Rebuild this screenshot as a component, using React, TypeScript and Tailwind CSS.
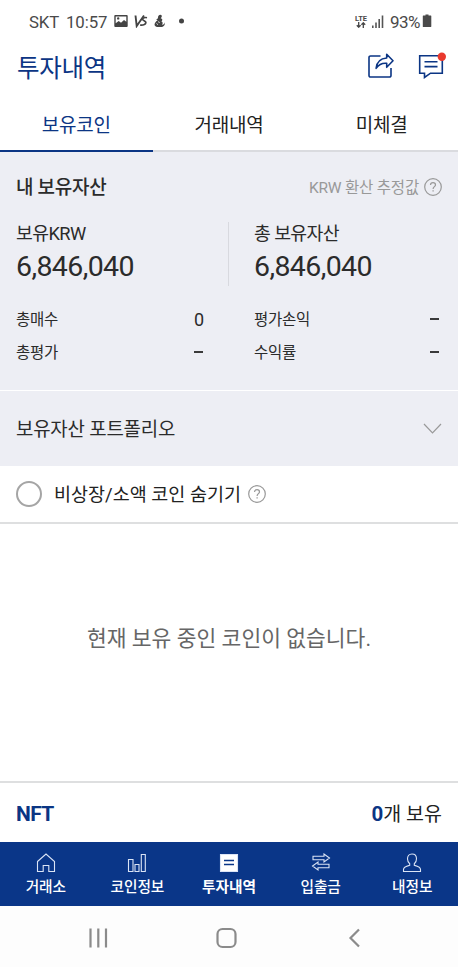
import type { ReactNode } from "react";

const FONT = "font-[Roboto,'Noto_Sans_CJK_KR',sans-serif]";

type TabKey = "holdings" | "history" | "open";

const tabs: { key: TabKey; label: string }[] = [
  { key: "holdings", label: "보유코인" },
  { key: "history", label: "거래내역" },
  { key: "open", label: "미체결" },
];

function HelpIcon() {
  return (
    <svg width="18" height="18" viewBox="0 0 18 18" fill="none" stroke="#999" strokeWidth="1.2">
      <circle cx="9" cy="9" r="8.3" />
      <path d="M6.5 7.1C6.5 5.6 7.5 4.7 9 4.7s2.5.9 2.5 2.2c0 1.7-2.4 1.9-2.4 4" />
      <path d="M9.1 12.2v1.4" strokeWidth="1.3" />
    </svg>
  );
}

function StatusBar() {
  return (
    <div className="flex h-[42px] shrink-0 items-center pr-[26px] pl-[29px] text-[#4a4a4a]">
      <span className="mt-[3px] w-[31px] text-[16.8px] tracking-[-0.1px]">SKT</span>
      <span className="mt-[3px] ml-1.5 w-[48px] text-[16.8px] tracking-[-0.1px]">10:57</span>
      <svg width="72" height="14" viewBox="0 0 72 14">
        <path
          fillRule="evenodd"
          fill="#444"
          d="M1.2 1h11.6a.9.9 0 0 1 .9.9v10.2a.9.9 0 0 1-.9.9H1.2a.9.9 0 0 1-.9-.9V1.900A.9.9 0 0 1 1.200 1Zm.5 1.400v6.800l3-2.200 2.300 1.700 3-2.700 2.300 1.800V2.400ZM4.200 3.200a1.200 1.200 0 1 1 0 2.400 1.200 1.200 0 0 1 0-2.400Z"
        />
        <path d="M21.5 1.5 22.7 12 30 1.5" fill="none" stroke="#444" strokeWidth="1.9" />
        <path d="M33 3.700c-2-.6-4.300.3-4.300 1.700 0 1.300 3.400 1.500 3.200 3.300-.2 1.900-3.400 2.900-5.700 2.200" fill="none" stroke="#444" strokeWidth="1.7" />
        <path
          d="M46.200.8c1.500 0 2.100 1.300 1.300 2.400l-.8 1c2 .3 2.100 2 .7 3.200 1.700.6 1.500 2.200.5 3.300 1.800.2 2.700-.9 2.800-2.500.8 3.400-1.700 5.100-4.500 4.700-1.900.5-4.900.1-5.700-2 0-2 1.500-3.800 3.300-4.700l-1.700-.5c1-.7 1.900-1.200 1.900-2.300 0-1.500 1.200-2.500 2.200-2.600Z"
          fill="#444"
        />
        <path d="m42.500 9.500 1.500 1.200M44 7.700l1.800.8" stroke="#fff" strokeWidth=".8" />
        <circle cx="67.500" cy="7" r="2.500" fill="#444" />
      </svg>
      <div className="ml-auto flex items-center">
        <div className="flex w-[14px] flex-col items-center">
          <span className="text-[7.5px] leading-[7px] font-bold">LTE</span>
          <svg width="10" height="6" viewBox="0 0 10 6" fill="none" stroke="#444" strokeWidth="1.3">
            <path d="M2.700 0v5M.8 3.300l1.900 1.900 1.900-1.900M7.300 6V1M5.400 2.700 7.300.8l1.900 1.900" />
          </svg>
        </div>
        <svg className="ml-1" width="12" height="13" viewBox="0 0 12 13" fill="#555">
          <path d="M0 10.500h1.600V13H0zM3.200 7.500h1.600V13H3.200zM6.400 4H8v9H6.400zM9.700.5h1.600V13H9.700z" />
        </svg>
        <span className="mt-[3px] ml-1.5 w-[32px] text-[17px] tracking-[-0.5px]">93%</span>
        <svg width="10" height="14" viewBox="0 0 10 14" fill="#4a4a4a">
          <path d="M3.500.5h3v1h2.300c.3 0 .5.200.5.500v10.500c0 .3-.2.500-.5.500H1.300a.5.5 0 0 1-.5-.5V2c0-.3.200-.5.500-.5h2.200z" />
        </svg>
      </div>
    </div>
  );
}

function Header() {
  return (
    <header className="flex h-14 shrink-0 items-center justify-between pr-3 pl-[17px] text-[#0b3584]">
      <h1 className="mt-[-2px] text-[24.5px] tracking-[-0.3px]">투자내역</h1>
      <div className="mt-[-9px] flex items-center">
        <svg width="27" height="27" viewBox="0 0 27 27" fill="none" stroke="#0b3584" strokeWidth="1.6">
          <path d="M13.500 4H3.500A1.500 1.500 0 0 0 2 5.500v18A1.500 1.500 0 0 0 3.500 25h19a1.500 1.500 0 0 0 1.500-1.500V16" />
          <path d="M19.700 2.300 26 8.800l-6.300 6.500v-4c-5-.5-8 1.300-10.600 5C9.700 10.500 13 6.500 19.700 6Z" strokeLinejoin="round" />
        </svg>
        <svg className="ml-6" width="28" height="27" viewBox="0 0 28 27" fill="none" stroke="#0b3584" strokeWidth="1.6">
          <path d="M1.700 3.700h22.600v17.500H12.500l-6 4.300v-4.300H1.700Z" />
          <path d="M6.500 9.800h13M6.500 14.600h13" />
          <circle cx="23.800" cy="4.700" r="4.200" fill="#e9392d" stroke="none" />
        </svg>
      </div>
    </header>
  );
}

function Tabs({ active }: { active: TabKey }) {
  return (
    <nav className="grid h-[54px] shrink-0 grid-cols-3 text-[19px] tracking-[-0.2px]">
      {tabs.map(({ key, label }) => (
        <button
          key={key}
          className={
            key === active
              ? "border-b-2 border-[#0b3584] pt-1 text-[#0b3584]"
              : "border-b-2 border-[#dadbdf] pt-1 text-[#222]"
          }
        >
          {label}
        </button>
      ))}
    </nav>
  );
}

function AssetRow({ label, value }: { label: string; value?: string }) {
  return (
    <div className="flex h-[33px] items-center justify-between text-[#2b2b2b]">
      <span className="pt-0.5 text-[15.5px] tracking-[-0.3px]">{label}</span>
      {value ? (
        <span className="text-[18px]">{value}</span>
      ) : (
        <span className="mr-px mb-px h-[2px] w-[9px] bg-[#3a3a3a]" />
      )}
    </div>
  );
}

function AssetColumn({ title, amount, children }: { title: string; amount: string; children: ReactNode }) {
  return (
    <div>
      <p className="h-[23px] text-[18.3px] leading-[23px] tracking-[-0.6px] text-[#2b2b2b]">{title}</p>
      <p className="mt-[5px] h-[34px] text-[28.5px] leading-[34px] tracking-[-0.6px] text-[#2b2b2b]">{amount}</p>
      <div className="mt-[19px]">{children}</div>
    </div>
  );
}

function Assets() {
  return (
    <section className="h-[238px] shrink-0 bg-[#edeef4] pr-4 pl-4">
      <div className="flex h-[70px] items-center justify-between">
        <h2 className="pt-[3px] text-[19px] font-medium tracking-[-0.3px] text-[#2b2b2b]">내 보유자산</h2>
        <div className="flex items-center gap-[5px] text-[15.5px] tracking-[-0.2px] text-[#999]">
          <span className="pt-[3px]">KRW 환산 추정값</span>
          <HelpIcon />
        </div>
      </div>
      <div className="grid grid-cols-[188px_25px_1fr]">
        <AssetColumn title="보유KRW" amount="6,846,040">
          <AssetRow label="총매수" value="0" />
          <AssetRow label="총평가" />
        </AssetColumn>
        <div className="h-[64px] w-px justify-self-end bg-[#d8d9df]" />
        <div className="pr-0.5 pl-[25px]">
          <AssetColumn title="총 보유자산" amount="6,846,040">
            <AssetRow label="평가손익" />
            <AssetRow label="수익률" />
          </AssetColumn>
        </div>
      </div>
    </section>
  );
}

const navItems: { label: string; icon: ReactNode; active?: boolean }[] = [
  { label: "거래소", icon: <path d="M1.500 8.500 10 1l8.500 7.500v10h-5.700v-6H7.200v6H1.500Z" /> },
  { label: "코인정보", icon: <path d="M1.500 6.500H6v12H1.500ZM8 11.500h4v7H8ZM14.300 1.500h4v17h-4Z" /> },
  {
    label: "투자내역",
    active: true,
    icon: (
      <>
        <path d="M1.500 1.500h17v17h-17Z" fill="#fff" />
        <path d="M5 7.500h10M5 11.500h10" stroke="#0a3688" strokeWidth="1.4" />
      </>
    ),
  },
  { label: "입출금", icon: <path d="M2 3.200h11V1l5.500 4-5.500 4V6.700H2ZM18 11.200H7V9l-5.500 4 5.500 4v-2.300h11Z" /> },
  {
    label: "내정보",
    icon: <path d="M10 1c3 0 4.500 2 4.500 4.800 0 2.400-.8 3.900-2.200 5v1.500c2.700.7 6.200 1.500 6.200 4.200v2h-17v-2c0-2.700 3.500-3.500 6.200-4.200v-1.500c-1.400-1.100-2.200-2.600-2.200-5C5.500 3 7 1 10 1Z" />,
  },
];

function BottomNav() {
  return (
    <nav className="grid h-16 shrink-0 grid-cols-5 bg-[#0a3688] text-white">
      {navItems.map(({ label, icon, active }) => (
        <button key={label} className="flex flex-col items-center pt-[11px]">
          <svg width="20" height="20" viewBox="0 0 20 20" fill="none" stroke="#dbe4f5" strokeWidth="1.1">
            {icon}
          </svg>
          <span
            className={
              active
                ? "mt-1 text-[14.7px] leading-5 font-bold"
                : "mt-1 text-[14.7px] leading-5 font-medium tracking-[-0.1px]"
            }
          >
            {label}
          </span>
        </button>
      ))}
    </nav>
  );
}

function SystemNav() {
  return (
    <div className="flex h-[61px] shrink-0 items-center bg-[#fdfdfd] pt-0.5 pl-[88px]">
      <svg width="276" height="22" viewBox="0 0 276 22" fill="none" stroke="#8b8b8b" strokeWidth="2.2">
        <path d="M2.500 1.500v19M10.300 1.500v19M18 1.500v19" />
        <rect x="129.500" y="2" width="18" height="18" rx="5" />
        <path d="M271 2.500 262.500 11l8.500 8.500" />
      </svg>
    </div>
  );
}

export default function App() {
  return (
    <div className={`${FONT} flex h-[967px] w-[458px] flex-col overflow-hidden bg-white`}>
      <StatusBar />
      <Header />
      <Tabs active="holdings" />
      <Assets />

      <section className="flex h-[76px] shrink-0 items-center justify-between border-t border-white bg-[#edeef4] px-4 text-[#2b2b2b]">
        <h2 className="pt-[3px] text-[18.9px] tracking-[-0.2px]">보유자산 포트폴리오</h2>
        <svg width="19" height="12" viewBox="0 0 19 12" fill="none" stroke="#999" strokeWidth="1.2">
          <path d="m1 1 8.500 9L18 1" />
        </svg>
      </section>

      <section className="flex h-[58px] shrink-0 items-center border-b-2 border-[#dedfe0] px-4">
        <span className="h-[26px] w-[26px] rounded-full border-2 border-[#a5a5a5]" />
        <span className="mr-[7px] ml-3 pt-[3px] text-[18.5px] text-[#222]">비상장/소액 코인 숨기기</span>
        <HelpIcon />
      </section>

      <main className="flex flex-1 justify-center pt-[99px]">
        <p className="text-[21.5px] leading-8 text-[#666]">현재 보유 중인 코인이 없습니다.</p>
      </main>

      <section className="flex h-[61px] shrink-0 items-center justify-between border-t-2 border-[#dedfe0] px-4 pt-1">
        <span className="pt-px text-[21px] font-bold tracking-[-0.6px] text-[#0b3584]">NFT</span>
        <span className="text-[19.5px] text-[#222]">
          <b className="text-[20.5px] text-[#0b3584]">0</b>개 보유
        </span>
      </section>

      <BottomNav />
      <SystemNav />
    </div>
  );
}
